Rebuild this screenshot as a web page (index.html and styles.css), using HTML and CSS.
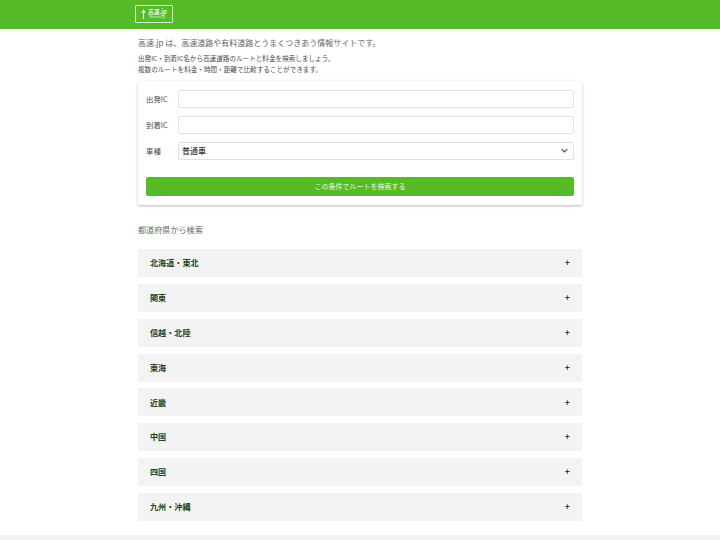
FILE: index.html
```html
<!DOCTYPE html>
<html lang="ja">
<head>
<meta charset="utf-8">
<title>高速.jp</title>
<link rel="stylesheet" href="styles.css">
</head>
<body>
<header class="header">
  <div class="container">
    <a class="logo">
      <svg class="logo-arrow" viewBox="0 0 6 12" width="5" height="10"><path d="M3 12V4" fill="none" stroke="#fff" stroke-width="1.3"/><path d="M.4 4.4 3 .4l2.6 4z" fill="#fff"/></svg>
      <span class="logo-text"><span class="logo-main">高速.jp</span><span class="logo-sub">Kousoku.jp</span></span>
    </a>
  </div>
</header>
<main class="container">
  <p class="lead">高速.jp は、高速道路や有料道路とうまくつきあう情報サイトです。</p>
  <p class="desc">出発IC・到着IC名から高速道路のルートと料金を検索しましょう。<br>複数のルートを料金・時間・距離で比較することができます。</p>
  <form class="card">
    <div class="field"><label class="label">出発IC</label><div class="input"></div></div>
    <div class="field"><label class="label">到着IC</label><div class="input"></div></div>
    <div class="field"><label class="label">車種</label>
      <div class="input select"><span>普通車</span>
        <svg viewBox="0 0 10 6" width="7" height="5"><path d="M1 1l4 4 4-4" fill="none" stroke="#444" stroke-width="1.5"/></svg>
      </div>
    </div>
    <div class="button">この条件でルートを検索する</div>
  </form>
  <h2 class="section-title">都道府県から検索</h2>
  <div class="regions">
    <div class="region"><span>北海道・東北</span><span class="plus">+</span></div>
    <div class="region"><span>関東</span><span class="plus">+</span></div>
    <div class="region"><span>信越・北陸</span><span class="plus">+</span></div>
    <div class="region"><span>東海</span><span class="plus">+</span></div>
    <div class="region"><span>近畿</span><span class="plus">+</span></div>
    <div class="region"><span>中国</span><span class="plus">+</span></div>
    <div class="region"><span>四国</span><span class="plus">+</span></div>
    <div class="region"><span>九州・沖縄</span><span class="plus">+</span></div>
  </div>
</main>
<footer class="footer"></footer>
</body>
</html>
```
FILE: styles.css
```css
* { box-sizing: border-box; }
html, body { margin: 0; padding: 0; }
body {
  background: #fff;
  color: #363636;
  font-family: "Noto Sans CJK JP", "Noto Sans", sans-serif;
  height: 540px;
  overflow: hidden;
}
.container { width: 444px; margin: 0 auto; }
.header { height: 28.5px; background: #56bb26; display: flex; align-items: center; }
.logo {
  display: flex; align-items: center; gap: 2px;
  width: 38px; height: 18px; margin-left: -3px; padding-left: 5px;
  border: 1px solid #d5efc8; border-radius: 1px;
}
.logo-text { display: flex; flex-direction: column; align-items: center; color: #fff; margin-bottom: 2px; }
.logo-main { font-size: 5.8px; line-height: 7px; font-weight: 500; }
.logo-sub { font-size: 3px; line-height: 4px; opacity: .8; }
.lead { margin: 7.5px 0 0; font-size: 8px; line-height: 13px; color: #666; }
.desc { margin: 3.5px 0 0; font-size: 6.6px; line-height: 11px; color: #4a4a4a; }
.card {
  margin-top: 6.5px; height: 124px; padding: 9px 8px;
  background: #fff; border-radius: 2px;
  box-shadow: 0 1px 3px rgba(10,10,10,.28);
  display: flex; flex-direction: column; gap: 8px;
}
.field { display: flex; align-items: center; height: 18px; }
.label { width: 32px; font-size: 7.4px; color: #4a4a4a; padding-bottom: 1.5px; }
.input {
  flex: 1; height: 18px; background: #fff;
  border: 1px solid #e0e0e0; border-radius: 2px;
}
.select {
  display: flex; align-items: center; justify-content: space-between;
  padding: 0 5px 1px 3px; font-size: 8px; font-weight: 500; color: #363636;
}
.button {
  margin-top: 9px; height: 19.5px; padding-bottom: 1px; border-radius: 2px;
  background: #56bb26; color: #e8f6e0; font-size: 7px;
  display: flex; align-items: center; justify-content: center;
}
.section-title { margin: 19px 0 0; font-size: 8.1px; line-height: 12px; font-weight: 400; color: #5f6f5a; }
.regions { margin-top: 13px; display: flex; flex-direction: column; gap: 6.85px; }
.region {
  height: 28px; padding: 0 12px 0.5px; background: #f3f3f3;
  display: flex; align-items: center; justify-content: space-between;
  font-size: 8.1px; font-weight: 700; color: #24461a;
}
.plus { font-weight: 500; color: #222; font-size: 9px; }
.footer { position: absolute; left: 0; right: 0; top: 535px; height: 5px; background: #f3f3f3; }
```
